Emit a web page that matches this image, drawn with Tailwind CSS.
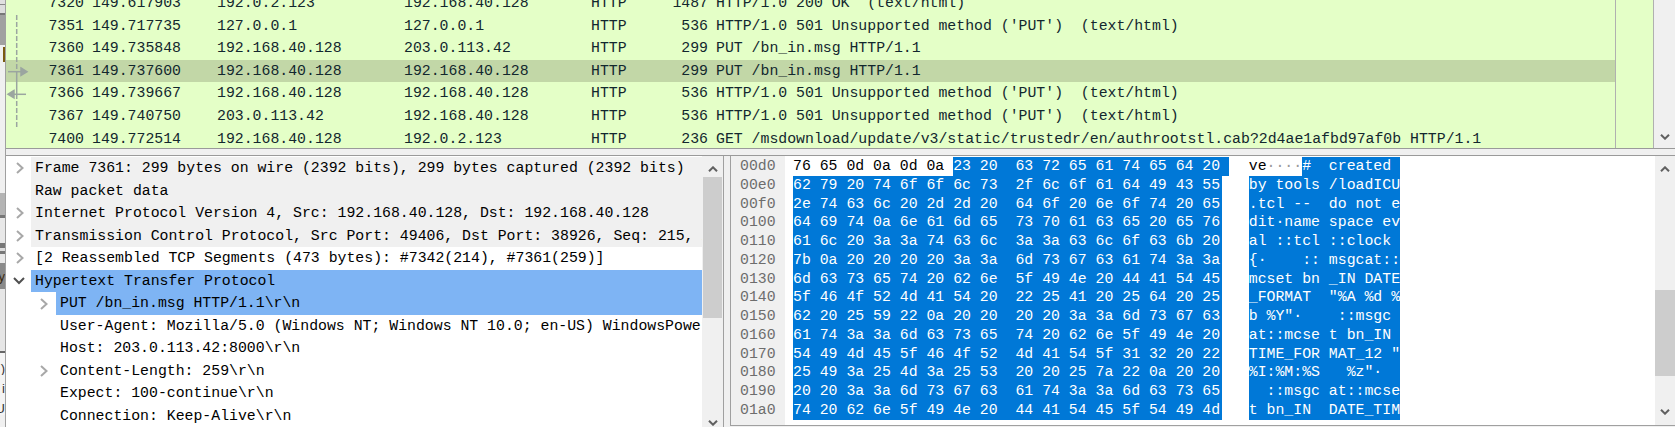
<!DOCTYPE html>
<html lang="en">
<head>
  <meta charset="UTF-8" />
  <title>Wireshark capture</title>
  <script src="https://cdn.jsdelivr.net/npm/@tailwindcss/browser@4"></script>
</head>
<body class="w-[1675px] h-[427px] overflow-hidden flex bg-[#f0f0f0] text-black text-[14.83px] font-['Liberation_Mono',monospace]">

  <!-- window behind, peeking out on the left -->
  <div class="w-[5px] h-[427px] shrink-0 relative flex flex-col overflow-hidden font-['Liberation_Sans',sans-serif] text-[13px] text-[#333]">
    <div class="h-[4px] bg-[#e0e0e0]"></div>
    <div class="h-[1px] bg-[#888888]"></div>
    <div class="h-[8px] bg-[#dddddd]"></div>
    <div class="h-[2px] bg-[#777777]"></div>
    <div class="h-[30px] bg-[#a0a0a0]"></div>
    <div class="h-[148px] bg-[#f0f0f0]"></div>
    <div class="h-[22px] bg-[#b4b4b4]"></div>
    <div class="h-[3px] bg-[#777777]"></div>
    <div class="h-[25px] bg-[#e8e8e8]"></div>
    <div class="h-[5px] bg-[#777777]"></div>
    <div class="h-[3px] bg-[#dddddd]"></div>
    <div class="h-[3px] bg-[#777777]"></div>
    <div class="h-[9px] bg-[#e8e8e8]"></div>
    <div class="h-[26px] bg-[#8a8a8a] flex justify-end items-center leading-none text-[#3a2a10]">y</div>
    <div class="h-[62px] bg-[#e6e6e6]"></div>
    <div class="h-[2px] bg-[#666666]"></div>
    <div class="h-[22px] bg-[#f4f4f4] flex justify-end items-end leading-none">)</div>
    <div class="h-[20px] bg-[#f4f4f4] flex justify-end items-end leading-none">i</div>
    <div class="h-[20px] bg-[#f4f4f4] flex justify-end items-end leading-none">U</div>
    <div class="absolute left-[3px] top-[47px] w-[2px] h-[15px] bg-[#7a5a10]"></div>
  </div>

  <main class="w-[1670px] shrink-0 border-l border-[#a0a0a0] flex flex-col">

    <!-- PACKET LIST -->
    <section class="h-[149px] shrink-0 flex border-b border-[#9a9a9a] bg-[#e4ffc7]">
      <div class="w-[1609px] shrink-0 relative overflow-hidden">
        <div class="-mt-[8px] flex flex-col text-[#12272e] whitespace-pre leading-[22.6px]">
          <div class="h-[22.6px] flex"><span class="w-[78px] text-right">7320</span><span class="w-[133px] pl-[8px]">149.617903</span><span class="w-[187px]">192.0.2.123</span><span class="w-[187px]">192.168.40.128</span><span class="w-[60px]">HTTP</span><span class="w-[57px] text-right">1487</span><span class="pl-[8px]">HTTP/1.0 200 OK  (text/html)</span></div>
          <div class="h-[22.6px] flex"><span class="w-[78px] text-right">7351</span><span class="w-[133px] pl-[8px]">149.717735</span><span class="w-[187px]">127.0.0.1</span><span class="w-[187px]">127.0.0.1</span><span class="w-[60px]">HTTP</span><span class="w-[57px] text-right">536</span><span class="pl-[8px]">HTTP/1.0 501 Unsupported method ('PUT')  (text/html)</span></div>
          <div class="h-[22.6px] flex"><span class="w-[78px] text-right">7360</span><span class="w-[133px] pl-[8px]">149.735848</span><span class="w-[187px]">192.168.40.128</span><span class="w-[187px]">203.0.113.42</span><span class="w-[60px]">HTTP</span><span class="w-[57px] text-right">299</span><span class="pl-[8px]">PUT /bn_in.msg HTTP/1.1</span></div>
          <div class="h-[22.6px] flex bg-[#c2d7a7]"><span class="w-[78px] text-right">7361</span><span class="w-[133px] pl-[8px]">149.737600</span><span class="w-[187px]">192.168.40.128</span><span class="w-[187px]">192.168.40.128</span><span class="w-[60px]">HTTP</span><span class="w-[57px] text-right">299</span><span class="pl-[8px]">PUT /bn_in.msg HTTP/1.1</span></div>
          <div class="h-[22.6px] flex"><span class="w-[78px] text-right">7366</span><span class="w-[133px] pl-[8px]">149.739667</span><span class="w-[187px]">192.168.40.128</span><span class="w-[187px]">192.168.40.128</span><span class="w-[60px]">HTTP</span><span class="w-[57px] text-right">536</span><span class="pl-[8px]">HTTP/1.0 501 Unsupported method ('PUT')  (text/html)</span></div>
          <div class="h-[22.6px] flex"><span class="w-[78px] text-right">7367</span><span class="w-[133px] pl-[8px]">149.740750</span><span class="w-[187px]">203.0.113.42</span><span class="w-[187px]">192.168.40.128</span><span class="w-[60px]">HTTP</span><span class="w-[57px] text-right">536</span><span class="pl-[8px]">HTTP/1.0 501 Unsupported method ('PUT')  (text/html)</span></div>
          <div class="h-[22.6px] flex"><span class="w-[78px] text-right">7400</span><span class="w-[133px] pl-[8px]">149.772514</span><span class="w-[187px]">192.168.40.128</span><span class="w-[187px]">192.0.2.123</span><span class="w-[60px]">HTTP</span><span class="w-[57px] text-right">236</span><span class="pl-[8px]">GET /msdownload/update/v3/static/trustedr/en/authrootstl.cab?2d4ae1afbd97af0b HTTP/1.1</span></div>
        </div>
        <!-- related packet markers -->
        <svg class="absolute left-0 top-0" width="30" height="140" fill="none" stroke="#9ba5a0" stroke-width="1.5">
          <path d="M10.7 15V71" stroke-dasharray="5 2" />
          <path d="M10.7 71V94" />
          <path d="M10.7 94V127" stroke-dasharray="5 2" />
          <path d="M2 71.7H16" />
          <path d="M15 68L21 71.7L15 75.5Z" fill="#9ba5a0" />
          <path d="M7 94.3H20" />
          <path d="M8 90.5L2 94.3L8 98Z" fill="#9ba5a0" />
        </svg>
      </div>
      <div class="w-[39px] shrink-0 border-x border-[#b0b0b0]"></div>
      <div class="flex-1 bg-[#f0f0f0] flex justify-center items-end pb-[8px]">
        <svg width="10" height="6" fill="none" stroke="#606060" stroke-width="2"><path d="M1 0.7L5 4.7L9 0.7" /></svg>
      </div>
    </section>

    <div class="h-[6px] shrink-0"></div>

    <!-- DETAILS + BYTES -->
    <section class="flex-1 min-h-0 flex border-t border-[#9a9a9a]">

      <!-- packet details -->
      <div class="w-[718px] shrink-0 flex border-r border-[#a0a0a0] bg-white">
        <div class="w-[696px] shrink-0 overflow-hidden pt-[1px]">
          <div class="flex flex-col whitespace-pre leading-[22.55px]">
            <div class="h-[22.55px] flex"><span class="w-[25px] shrink-0 flex items-center pl-[10px]"><svg width="8" height="12" fill="none" stroke="#a8a8a8" stroke-width="2"><path d="M1 1L6.5 6L1 11" /></svg></span><span class="flex-1 bg-[#f0f0f0] pl-[4px]">Frame 7361: 299 bytes on wire (2392 bits), 299 bytes captured (2392 bits)</span></div>
            <div class="h-[22.55px] flex"><span class="w-[25px] shrink-0"></span><span class="flex-1 bg-[#f0f0f0] pl-[4px]">Raw packet data</span></div>
            <div class="h-[22.55px] flex"><span class="w-[25px] shrink-0 flex items-center pl-[10px]"><svg width="8" height="12" fill="none" stroke="#a8a8a8" stroke-width="2"><path d="M1 1L6.5 6L1 11" /></svg></span><span class="flex-1 bg-[#f0f0f0] pl-[4px]">Internet Protocol Version 4, Src: 192.168.40.128, Dst: 192.168.40.128</span></div>
            <div class="h-[22.55px] flex"><span class="w-[25px] shrink-0 flex items-center pl-[10px]"><svg width="8" height="12" fill="none" stroke="#a8a8a8" stroke-width="2"><path d="M1 1L6.5 6L1 11" /></svg></span><span class="flex-1 bg-[#f0f0f0] pl-[4px] overflow-hidden">Transmission Control Protocol, Src Port: 49406, Dst Port: 38926, Seq: 215, Ack: 1, Len: 259</span></div>
            <div class="h-[22.55px] flex"><span class="w-[25px] shrink-0 flex items-center pl-[10px]"><svg width="8" height="12" fill="none" stroke="#a8a8a8" stroke-width="2"><path d="M1 1L6.5 6L1 11" /></svg></span><span class="flex-1 pl-[4px]">[2 Reassembled TCP Segments (473 bytes): #7342(214), #7361(259)]</span></div>
            <div class="h-[22.55px] flex"><span class="w-[25px] shrink-0 flex items-center pl-[7px]"><svg width="12" height="8" fill="none" stroke="#505050" stroke-width="2"><path d="M1 1L6 6L11 1" /></svg></span><span class="flex-1 bg-[#7eb4f4] pl-[4px]">Hypertext Transfer Protocol</span></div>
            <div class="h-[22.55px] flex"><span class="w-[50px] shrink-0 flex items-center pl-[34px]"><svg width="8" height="12" fill="none" stroke="#a8a8a8" stroke-width="2"><path d="M1 1L6.5 6L1 11" /></svg></span><span class="flex-1 bg-[#7eb4f4] pl-[4px]">PUT /bn_in.msg HTTP/1.1\r\n</span></div>
            <div class="h-[22.55px] flex"><span class="w-[50px] shrink-0"></span><span class="flex-1 pl-[4px] overflow-hidden">User-Agent: Mozilla/5.0 (Windows NT; Windows NT 10.0; en-US) WindowsPowerShell/5.1\r\n</span></div>
            <div class="h-[22.55px] flex"><span class="w-[50px] shrink-0"></span><span class="flex-1 pl-[4px]">Host: 203.0.113.42:8000\r\n</span></div>
            <div class="h-[22.55px] flex"><span class="w-[50px] shrink-0 flex items-center pl-[34px]"><svg width="8" height="12" fill="none" stroke="#a8a8a8" stroke-width="2"><path d="M1 1L6.5 6L1 11" /></svg></span><span class="flex-1 pl-[4px]">Content-Length: 259\r\n</span></div>
            <div class="h-[22.55px] flex"><span class="w-[50px] shrink-0"></span><span class="flex-1 pl-[4px]">Expect: 100-continue\r\n</span></div>
            <div class="h-[22.55px] flex"><span class="w-[50px] shrink-0"></span><span class="flex-1 pl-[4px]">Connection: Keep-Alive\r\n</span></div>
          </div>
        </div>
        <!-- scrollbar -->
        <div class="flex-1 bg-[#f0f0f0] flex flex-col items-center px-[1px]">
          <svg class="mt-[10px] shrink-0" width="10" height="6" fill="none" stroke="#606060" stroke-width="2"><path d="M1 5.3L5 1.3L9 5.3" /></svg>
          <div class="w-full h-[141px] mt-[5px] bg-[#cdcdcd]"></div>
          <svg class="mt-[102px] shrink-0" width="10" height="6" fill="none" stroke="#606060" stroke-width="2"><path d="M1 0.7L5 4.7L9 0.7" /></svg>
        </div>
      </div>

      <div class="w-[6px] shrink-0"></div>

      <!-- packet bytes -->
      <div class="flex-1 h-[270px] flex border-l border-b border-[#a0a0a0] bg-white">
        <div id="hex-pane" class="w-[924px] shrink-0 flex flex-col whitespace-pre leading-[18.77px]"></div>
        <div class="flex-1 bg-[#f0f0f0] flex flex-col items-center">
          <svg class="mt-[10px] shrink-0" width="10" height="6" fill="none" stroke="#606060" stroke-width="2"><path d="M1 5.3L5 1.3L9 5.3" /></svg>
          <div class="w-full h-[86px] mt-[118px] bg-[#cdcdcd]"></div>
          <svg class="mt-[33px] shrink-0" width="10" height="6" fill="none" stroke="#606060" stroke-width="2"><path d="M1 0.7L5 4.7L9 0.7" /></svg>
        </div>
      </div>
    </section>
  </main>

  <script>
    const hexRows = [
      ['00e0', '62 79 20 74 6f 6f 6c 73  2f 6c 6f 61 64 49 43 55 ', 'by tools /loadICU'],
      ['00f0', '2e 74 63 6c 20 2d 2d 20  64 6f 20 6e 6f 74 20 65 ', '.tcl --  do not e'],
      ['0100', '64 69 74 0a 6e 61 6d 65  73 70 61 63 65 20 65 76 ', 'dit\u00b7name space ev'],
      ['0110', '61 6c 20 3a 3a 74 63 6c  3a 3a 63 6c 6f 63 6b 20 ', 'al ::tcl ::clock '],
      ['0120', '7b 0a 20 20 20 20 3a 3a  6d 73 67 63 61 74 3a 3a ', '{\u00b7    :: msgcat::'],
      ['0130', '6d 63 73 65 74 20 62 6e  5f 49 4e 20 44 41 54 45 ', 'mcset bn _IN DATE'],
      ['0140', '5f 46 4f 52 4d 41 54 20  22 25 41 20 25 64 20 25 ', '_FORMAT  "%A %d %'],
      ['0150', '62 20 25 59 22 0a 20 20  20 20 3a 3a 6d 73 67 63 ', 'b %Y"\u00b7    ::msgc'],
      ['0160', '61 74 3a 3a 6d 63 73 65  74 20 62 6e 5f 49 4e 20 ', 'at::mcse t bn_IN '],
      ['0170', '54 49 4d 45 5f 46 4f 52  4d 41 54 5f 31 32 20 22 ', 'TIME_FOR MAT_12 "'],
      ['0180', '25 49 3a 25 4d 3a 25 53  20 20 25 7a 22 0a 20 20 ', '%I:%M:%S   %z"\u00b7 '],
      ['0190', '20 20 3a 3a 6d 73 67 63  61 74 3a 3a 6d 63 73 65 ', '  ::msgc at::mcse'],
      ['01a0', '74 20 62 6e 5f 49 4e 20  44 41 54 45 5f 54 49 4d ', 't bn_IN  DATE_TIM']
    ];

    const offset = (o) => `<span class="w-[54px] shrink-0 bg-[#f0f0f0] text-[#6d6d6d] pl-[9px]">${o}</span>`;

    // first row: selection starts partway through
    let html = `
      <div class="h-[1px] shrink-0 flex"><span class="w-[54px] bg-[#f0f0f0]"></span></div>
      <div class="h-[18.77px] shrink-0 flex">${offset('00d0')}
        <span class="w-[429.4px] ml-[8px] shrink-0 flex"><span>76 65 0d 0a 0d 0a </span><span class="flex-1 bg-[#0078d7] text-white">23 20  63 72 65 61 74 65 64 20 </span></span>
        <span class="w-[151.3px] ml-[26.4px] shrink-0 flex"><span>ve<span class="text-[#9a9a9a]">\u00b7\u00b7\u00b7\u00b7</span></span><span class="flex-1 bg-[#0078d7] text-white">#  created </span></span>
      </div>`;

    hexRows.forEach(([o, hex, ascii]) => {
      html += `
      <div class="h-[18.77px] shrink-0 flex">${offset(o)}
        <span class="w-[429.4px] ml-[8px] shrink-0 bg-[#0078d7] text-white">${hex}</span>
        <span class="w-[151.3px] ml-[26.4px] shrink-0 bg-[#0078d7] text-white overflow-hidden">${ascii}</span>
      </div>`;
    });

    html += `<div class="flex-1 flex"><span class="w-[54px] bg-[#f0f0f0]"></span></div>`;

    document.getElementById('hex-pane').innerHTML = html;
  </script>
</body>
</html>
